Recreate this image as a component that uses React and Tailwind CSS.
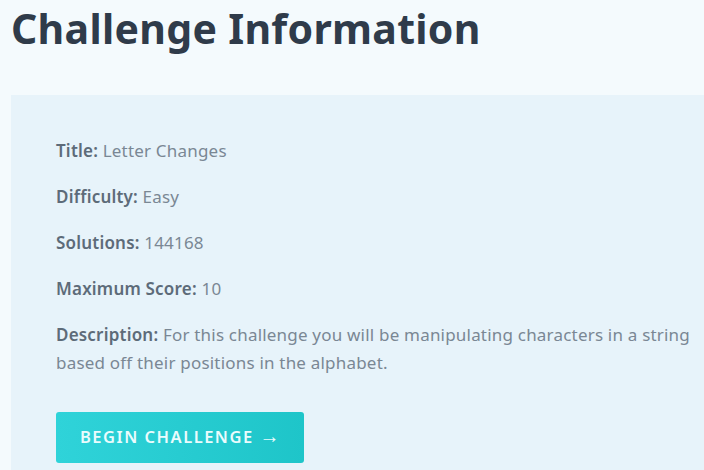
export default function App() {
  const rows = [
    ["Title:", "Letter Changes"],
    ["Difficulty:", "Easy"],
    ["Solutions:", "144168"],
    ["Maximum Score:", "10"],
  ];
  return (
    <div className="w-[704px] h-[470px] overflow-hidden bg-[#f4fafd]" style={{ fontFamily: '"Noto Sans", "Open Sans", sans-serif' }}>
      <h1 className="pl-[11px] pt-[1px] h-[95px] text-[41px] leading-[54px] font-bold text-[#2f3b4a] tracking-[0.3px]">
        Challenge Information
      </h1>
      <div className="ml-[11px] w-[720px] h-[400px] bg-[#e7f3fa] pl-[45px] pt-[42px]">
        {rows.map(([k, v]) => (
          <p key={k} className="text-[17px] leading-[28px] text-[#7a8794] mb-[18px] tracking-[0.2px]">
            <span className="font-semibold text-[#5d6b79]">{k}</span> {v}
          </p>
        ))}
        <p className="text-[17px] leading-[28px] text-[#7a8794] w-[645px] tracking-[0.2px]">
          <span className="font-semibold text-[#5d6b79]">Description:</span> For this challenge you will be manipulating characters in a string based off their positions in the alphabet.
        </p>
        <button className="mt-[35px] w-[248px] h-[51px] rounded-[3px] bg-gradient-to-r from-[#2fd3d9] to-[#1ec5c9] text-[#eafcfd] text-[16.5px] font-semibold tracking-[1.5px] text-left pl-[24px]">
          BEGIN CHALLENGE <span className="text-[20px] leading-none">→</span>
        </button>
      </div>
    </div>
  );
}
